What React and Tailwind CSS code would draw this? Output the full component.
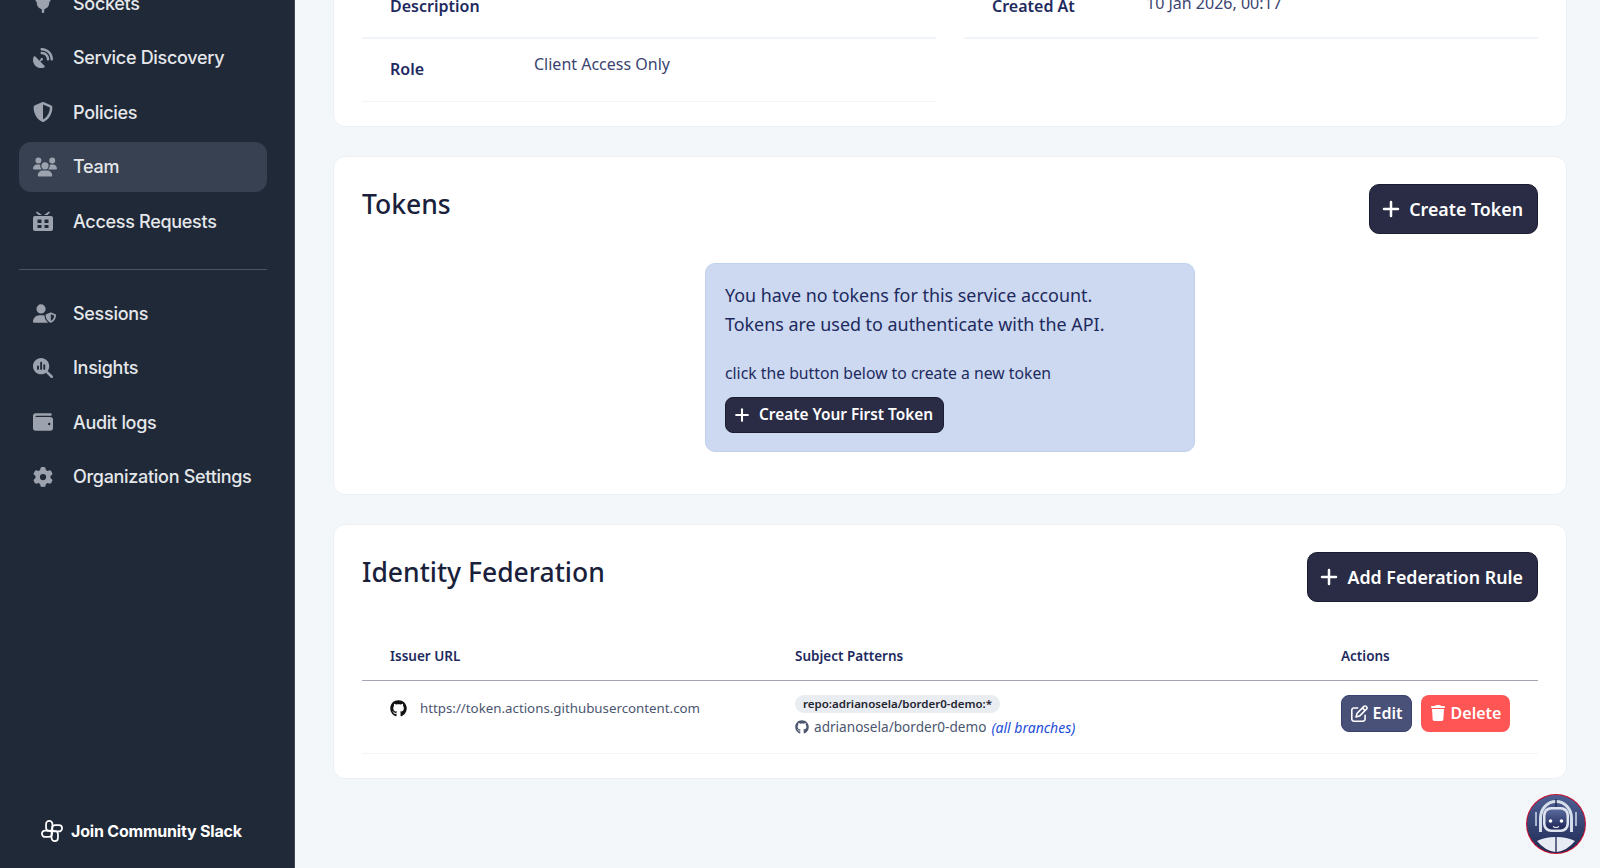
import { Plus } from 'lucide-react';
import {
  FaGear,
  FaGithub,
  FaMagnifyingGlassChart,
  FaPlug,
  FaRegPenToSquare,
  FaSatelliteDish,
  FaShieldHalved,
  FaTrash,
  FaUserShield,
  FaUsers,
  FaWallet,
} from 'react-icons/fa6';

function RequestsIcon({ className }) {
  return (
    <svg className={className} viewBox="0 0 20 20" fill="currentColor">
      <path d="M4 0.5 9 4H5.5L3 1.5zM16 0.5 11 4h3.5L17 1.5z" />
      <path
        fillRule="evenodd"
        d="M2 5h16a2 2 0 0 1 2 2v11a2 2 0 0 1-2 2H2a2 2 0 0 1-2-2V7a2 2 0 0 1 2-2zm2.5 3.5v3.5h4V8.5zm7 0v3.5h4V8.5zm-7 5.5v3h4v-3zm7 0v3h4v-3z"
      />
    </svg>
  );
}

function SlackOutline({ className }) {
  return (
    <svg className={className} viewBox="0 0 24 24" fill="none" stroke="currentColor" strokeWidth="1.9">
      <rect x="5.5" y="1" width="7" height="11" rx="3.5" />
      <rect x="12" y="5.5" width="11" height="7" rx="3.5" />
      <rect x="11.5" y="12" width="7" height="11" rx="3.5" />
      <rect x="1" y="11.5" width="11" height="7" rx="3.5" />
    </svg>
  );
}

const mainLinks = [
  { label: 'Sockets', icon: FaPlug },
  { label: 'Service Discovery', icon: FaSatelliteDish },
  { label: 'Policies', icon: FaShieldHalved },
  { label: 'Team', icon: FaUsers, iconClass: 'h-[24px]', active: true },
  { label: 'Access Requests', icon: RequestsIcon },
];

const otherLinks = [
  { label: 'Sessions', icon: FaUserShield, iconClass: 'h-[23px]' },
  { label: 'Insights', icon: FaMagnifyingGlassChart },
  { label: 'Audit logs', icon: FaWallet },
  { label: 'Organization Settings', icon: FaGear },
];

function NavLink({ label, icon: Icon, iconClass = 'h-[20px]', active }) {
  return (
    <a className={`flex h-[50px] items-center rounded-xl pl-[14px] ${active ? 'bg-[#374151]' : ''}`}>
      <span className="flex w-[40px] shrink-0 items-center">
        <Icon className={`w-auto text-[#9ca3af] ${iconClass}`} />
      </span>
      <span className="text-[18px] font-medium tracking-[-0.3px] text-[#e5e7eb]">{label}</span>
    </a>
  );
}

function Sidebar() {
  return (
    <aside className="flex h-screen w-[295px] shrink-0 flex-col overflow-hidden border-r border-[#3f4854] bg-[#1f2937] pr-[27px] pl-[19px] font-['Inter',sans-serif]">
      <nav className="-mt-[22px] flex flex-col gap-[4.5px]">
        {mainLinks.map((l) => (
          <NavLink key={l.label} {...l} />
        ))}
      </nav>
      <div className="mt-[23px] mb-[18px] border-t border-[#4b5563]" />
      <nav className="flex flex-col gap-[4.5px]">
        {otherLinks.map((l) => (
          <NavLink key={l.label} {...l} />
        ))}
      </nav>
      <a className="mt-auto mb-[25px] flex items-center gap-[8px] pl-[22px] text-[16px] font-bold tracking-[-0.2px] text-white">
        <SlackOutline className="h-[22px] w-[22px]" />
        Join Community Slack
      </a>
    </aside>
  );
}

function DarkButton({ children, small }) {
  return (
    <button
      className={`flex items-center border border-[#1a1c30] bg-[#2a2c45] font-semibold text-white ${
        small
          ? 'h-[36px] gap-[7px] rounded-lg pr-[10px] pl-[6px] text-[15.4px]'
          : 'h-[50px] gap-[6px] rounded-[10px] pr-[14px] pl-[9px] text-[17.8px]'
      }`}
    >
      <Plus className={small ? 'h-[20px] w-[20px]' : 'h-[24px] w-[24px]'} strokeWidth={2.5} />
      {children}
    </button>
  );
}

function InfoRow({ label, value, labelClass, valueClass, rowClass = 'h-[62px] border-b' }) {
  return (
    <div className={`flex border-[#f1f5f9] px-[28px] ${rowClass}`}>
      <div className={`w-[144px] text-[16px] font-semibold text-[#1e2a5e] ${labelClass}`}>{label}</div>
      <div className={`text-[16px] text-[#3b4470] ${valueClass}`}>{value}</div>
    </div>
  );
}

function Card({ children, className = '' }) {
  return <section className={`rounded-xl border border-[#eceff4] bg-white px-[28px] ${className}`}>{children}</section>;
}

function BotAvatar() {
  return (
    <svg className="fixed right-[14px] bottom-[14px] h-[60px] w-[60px]" viewBox="0 0 60 60">
      <defs>
        <linearGradient id="botBg" x1="0" y1="0" x2="0" y2="1">
          <stop offset="0" stopColor="#4d5f93" />
          <stop offset="1" stopColor="#1f2a55" />
        </linearGradient>
        <linearGradient id="botFace" x1="0" y1="0" x2="0" y2="1">
          <stop offset="0" stopColor="#5a6a9c" />
          <stop offset="1" stopColor="#1d2657" />
        </linearGradient>
      </defs>
      <circle cx="30" cy="30" r="30" fill="#c8102e" />
      <circle cx="30" cy="30" r="29" fill="url(#botBg)" />
      <path d="M13 24a17 18 0 0 1 34 0v14h-3V24a14 15 0 0 0-28 0v14h-3z" fill="#d5dcea" />
      <path d="M29.3 5h1.4v8h-1.4z" fill="#1f2a55" />
      <rect x="17" y="13" width="26" height="25" rx="8" fill="#dfe5f0" />
      <rect x="19.5" y="15.5" width="21" height="20" rx="6" fill="url(#botFace)" />
      <circle cx="24.5" cy="27" r="1.8" fill="#fff" />
      <circle cx="35.5" cy="27" r="1.8" fill="#fff" />
      <path d="M27 32.5q3 2 6 0" stroke="#fff" strokeWidth="1.2" fill="none" />
      <path d="M49 18h2v14h-2zM9 18h2v14H9z" fill="#aab5cf" />
      <path d="M11 47q8-4 18.3-4v15q-10-1-18.3-11zM49 47q-8-4-18.3-4v15q10-1 18.3-11z" fill="#e6ebf4" />
    </svg>
  );
}

function FederationTable() {
  return (
    <table className="w-full table-fixed border-collapse text-left">
      <colgroup>
        <col className="w-[405px]" />
        <col className="w-[546px]" />
        <col />
      </colgroup>
      <thead>
        <tr className="h-[50px] border-b border-[#a3a5b6] text-[13.5px] text-[#1e2a5e]">
          <th className="px-[28px] pt-[2px] font-semibold">Issuer URL</th>
          <th className="px-[28px] pt-[2px] font-semibold">Subject Patterns</th>
          <th className="px-[28px] pt-[2px] font-semibold">Actions</th>
        </tr>
      </thead>
      <tbody>
        <tr className="h-[73px] border-b border-[#f1f5f9] align-top">
          <td className="px-[28px] pt-[18px]">
            <div className="flex items-center gap-[13px] text-[13.3px] text-[#4b5670]">
              <FaGithub className="h-[17px] w-[17px] text-[#111]" />
              https://token.actions.githubusercontent.com
            </div>
          </td>
          <td className="px-[28px] pt-[14px]">
            <span className="block h-[18px] w-fit rounded-full bg-[#e9ecf1] px-[8px] text-[11.5px] leading-[18px] font-semibold text-[#1f2430]">
              repo:adrianosela/border0-demo:*
            </span>
            <div className="mt-[4px] flex items-center text-[13.6px] text-[#4b5670]">
              <FaGithub className="mr-[5px] h-[14px] w-[14px]" />
              adrianosela/border0-demo
              <span className="ml-[5px] text-[14px] text-[#1d4ed8] italic">(all branches)</span>
            </div>
          </td>
          <td className="px-[28px] pt-[14px]">
            <div className="flex gap-[9px] text-[16px] font-semibold text-white">
              <button className="flex h-[37px] w-[71px] items-center justify-center gap-[5px] rounded-lg border border-[#3a4170] bg-[#4a5178]">
                <FaRegPenToSquare className="h-[17px] w-[17px]" />
                Edit
              </button>
              <button className="flex h-[37px] w-[89px] items-center justify-center gap-[5px] rounded-lg bg-[#ff5555]">
                <FaTrash className="h-[16px] w-[16px]" />
                Delete
              </button>
            </div>
          </td>
        </tr>
      </tbody>
    </table>
  );
}

export default function App() {
  return (
    <div className="flex h-screen overflow-hidden bg-[#f4f7fa] font-['Noto_Sans',sans-serif]">
      <Sidebar />
      <main className="-mt-[53px] flex min-w-0 flex-1 flex-col gap-[29px] pr-[33px] pl-[38px]">
        <Card className="pt-[29px] pb-[24px]">
          <div className="grid grid-cols-2 gap-[28px]">
            <div>
              <InfoRow label="Description" value="" labelClass="pt-[17px] text-[15.6px]" rowClass="h-[62px] border-b-2" />
              <InfoRow label="Role" value="Client Access Only" labelClass="pt-[18px]" valueClass="pt-[13px]" rowClass="h-[63px] border-b" />
            </div>
            <div>
              <InfoRow label="Created At" value="10 Jan 2026, 00:17" labelClass="pt-[17px] !w-[154px]" valueClass="pt-[14px]" rowClass="h-[62px] border-b-2" />
            </div>
          </div>
        </Card>

        <Card className="pt-[27px] pb-[42px]">
          <div className="flex items-start justify-between">
            <h2 className="pt-[1px] text-[26.5px] leading-[38px] font-medium text-[#1a1f3c]">Tokens</h2>
            <DarkButton>Create Token</DarkButton>
          </div>
          <div className="mx-auto mt-[29px] h-[189px] w-[490px] rounded-[10px] border border-[#bfd0ec] bg-[#ccd9f0] px-[19px] pt-[17px] text-[#1e2a5e]">
            <p className="text-[17.9px] leading-[29px]">You have no tokens for this service account.</p>
            <p className="text-[17.9px] leading-[29px]">Tokens are used to authenticate with the API.</p>
            <p className="mt-[22px] mb-[12px] text-[15.75px] leading-[24px]">click the button below to create a new token</p>
            <DarkButton small>Create Your First Token</DarkButton>
          </div>
        </Card>

        <Card className="pt-[27px] pb-[24px]">
          <div className="flex items-start justify-between">
            <h2 className="pt-[1px] text-[26.5px] leading-[38px] font-medium text-[#1a1f3c]">Identity Federation</h2>
            <DarkButton>Add Federation Rule</DarkButton>
          </div>
          <div className="mt-[28px]">
            <FederationTable />
          </div>
        </Card>
      </main>
      <BotAvatar />
    </div>
  );
}
